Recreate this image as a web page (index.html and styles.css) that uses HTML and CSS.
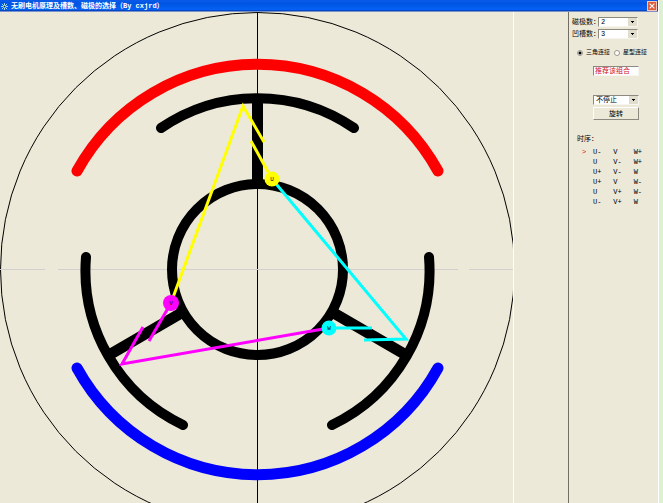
FILE: index.html
```html
<!DOCTYPE html>
<html lang="zh-CN">
<head>
    <meta charset="UTF-8">
    <meta name="viewport" content="width=device-width, initial-scale=1.0">
    <title>无刷电机原理及槽数、磁极的选择</title>
    <link rel="stylesheet" href="styles.css">
</head>
<body>
    <div class="window">
        <header class="titlebar">
            <svg class="app-icon" viewBox="0 0 8 8" aria-hidden="true">
                <path d="M4 0V8M0 4H8M1 1L7 7M7 1L1 7" stroke="#b8f0e8" fill="none"/>
                <circle cx="4" cy="4" r="1" fill="#123"/>
            </svg>
            <h1>无刷电机原理及槽数、磁极的选择（By cxjrd）</h1>
            <button class="close" aria-label="关闭">
                <svg viewBox="0 0 10 10" aria-hidden="true"><path d="M2 2L8 8M8 2L2 8" stroke="#fff" stroke-width="1.4"/></svg>
            </button>
        </header>
        <main class="content">
            <!-- origin is the motor shaft -->
            <svg class="motor" viewBox="-257 -257 513 491" role="img" aria-label="电机绕组图">
                <g fill="none" stroke="#000">
                    <circle cx="0.5" cy="0.5" r="257"/>
                    <path d="M0.5 -257V234"/>
                    <path d="M-257 0.5H-212M-199 0.5H201M212 0.5H256" stroke="#d2d0ce"/>
                </g>
                <g fill="none" stroke-width="11" stroke-linecap="round">
                    <path d="M-180 -98A206 206 0 0 1 181 -98" stroke="#f00"/>
                    <path d="M-180 99A206 206 0 0 0 181 99" stroke="#00f"/>
                </g>
                <g fill="none" stroke="#000" stroke-width="10" stroke-linecap="round">
                    <circle cx="0.5" cy="0.5" r="85.5"/>
                    <path d="M-96 -141A171 171 0 0 1 97 -141"/>
                    <path d="M-171 -12A171 171 0 0 0 -74 156"/>
                    <path d="M172 -12A171 171 0 0 1 75 156"/>
                    <path d="M0.5 -170V-85M-148 86L-74 43M149 86L75 43" stroke-linecap="butt" stroke-width="11"/>
                </g>
                <g fill="none" stroke-width="3">
                    <path d="M-86 34L-14 -163L7 -127M-6 -128L15 -90" stroke="#ff0"/>
                    <path d="M15 -90L149 70L107 71M115 59H72" stroke="#0ff"/>
                    <path d="M72 59L-135 95L-114 58M-108 72L-86 34" stroke="#f0f"/>
                </g>
                <g class="nodes">
                    <circle cx="15" cy="-90" r="7.5" fill="#ff0"/>
                    <circle cx="-86" cy="34" r="8" fill="#f0f"/>
                    <circle cx="72" cy="59" r="7.5" fill="#0ff"/>
                    <text x="15" y="-88">U</text>
                    <text x="-86" y="36">V</text>
                    <text x="72" y="61">W</text>
                </g>
            </svg>
            <aside class="panel">
                <div class="field">
                    <label for="poles">磁极数：</label>
                    <select id="poles"><option>2</option><option>4</option></select>
                </div>
                <div class="field">
                    <label for="slots">凹槽数：</label>
                    <select id="slots"><option>3</option><option>6</option></select>
                </div>
                <div class="wiring">
                    <label><input type="radio" name="wiring" checked>三角连接</label>
                    <label><input type="radio" name="wiring">星型连接</label>
                </div>
                <div class="actions">
                    <input class="advice" type="text" value="推荐该组合" aria-label="组合建议" readonly>
                    <select aria-label="停止方式"><option>不停止</option><option>停止</option></select>
                    <button class="rotate">旋转</button>
                </div>
                <h2>时序：</h2>
                <table class="sequence">
                    <tr><td class="mark">&gt;</td><td>U-</td><td>V</td><td>W+</td></tr>
                    <tr><td></td><td>U</td><td>V-</td><td>W+</td></tr>
                    <tr><td></td><td>U+</td><td>V-</td><td>W</td></tr>
                    <tr><td></td><td>U+</td><td>V</td><td>W-</td></tr>
                    <tr><td></td><td>U</td><td>V+</td><td>W-</td></tr>
                    <tr><td></td><td>U-</td><td>V+</td><td>W</td></tr>
                </table>
            </aside>
        </main>
    </div>
</body>
</html>
```
FILE: styles.css
```css
* {
    box-sizing: border-box;
}
body {
    margin: 0;
    background: #dcf0d2;
    color: #000;
    font-family: "Liberation Mono", "Noto Sans CJK SC", monospace;
    font-size: 7px;
    line-height: 10px;
}
h1, h2 {
    margin: 0;
    font-size: 7px;
}
button, input, select {
    margin: 0;
    font: inherit;
    color: inherit;
    border-radius: 0;
}
.window {
    display: flex;
    flex-direction: column;
    min-height: 100vh;
    margin-right: 4px;
    background: #ece9d8;
    border-right: 1px solid #fff;
}
.titlebar {
    display: flex;
    align-items: center;
    gap: 3px;
    height: 12px;
    padding: 0 1px;
    background: linear-gradient(#0a5be8, #0054e3 30%, #0562f5 80%, #0344c0 88%, #b9bfd0);
    color: #fff;
}
.app-icon {
    width: 7px;
    height: 7px;
}
.titlebar h1 {
    flex: 1;
    white-space: nowrap;
}
.close {
    display: flex;
    width: 10px;
    height: 10px;
    padding: 0;
    border: 1px solid #f3c9bd;
    background: #dd5b37;
}
.content {
    display: flex;
    flex: 1;
}
.motor {
    flex: 1;
    min-width: 0;
    align-self: flex-start;
}
.nodes text {
    font-size: 6px;
    text-anchor: middle;
}
.panel {
    width: 145px;
    padding: 4px 4px 0 58px;
    border-left: 1px solid #fff;
    background: linear-gradient(#716f64, #716f64) 54px 0 / 1px 100% no-repeat;
}
.field {
    display: flex;
    height: 12px;
    align-items: center;
}
.field label {
    width: 26px;
    white-space: nowrap;
}
select {
    width: 40px;
    height: 10px;
    padding: 0 2px;
    border: 1px solid #8c8a7e;
    border-right-color: #f6f5ee;
    border-bottom-color: #f6f5ee;
    appearance: none;
    line-height: 8px;
    background:
        linear-gradient(#000, #000) right 3px top 3px / 3px 1px no-repeat,
        linear-gradient(#000, #000) right 4px top 4px / 1px 1px no-repeat,
        linear-gradient(#e0ddcc, #e0ddcc) right / 9px 100% no-repeat,
        #fff;
}
.wiring {
    display: flex;
    gap: 4px;
    margin: 8px 0 0 5px;
    font-size: 6px;
    white-space: nowrap;
}
.wiring label {
    display: flex;
    align-items: center;
    gap: 3px;
}
.wiring input {
    width: 6px;
    height: 6px;
    border: 1px solid #9a988c;
    border-radius: 50%;
    appearance: none;
    background: #fff;
}
.wiring input:checked {
    background: radial-gradient(#000 1px, #fff 2px);
}
.actions {
    display: flex;
    flex-direction: column;
    width: 46px;
    margin: 8px 0 0 21px;
}
.actions select {
    width: 100%;
}
.advice {
    width: 100%;
    height: 10px;
    margin-bottom: 19px;
    padding: 0 1px;
    border: 1px solid #8c8a7e;
    border-right-color: #f6f5ee;
    border-bottom-color: #f6f5ee;
    background: #fff;
    color: #d01020;
}
.rotate {
    height: 13px;
    margin-top: 2px;
    padding: 0;
    border: 1px solid #fff;
    border-right-color: #8c8a7e;
    border-bottom-color: #8c8a7e;
    background: #ece9d8;
}
.panel h2 {
    margin: 14px 0 0 5px;
    font-weight: normal;
}
.sequence {
    width: 72px;
    margin: 3px 0 0 10px;
    border-collapse: collapse;
    table-layout: fixed;
}
.sequence td {
    height: 10px;
    padding: 0;
}
.sequence .mark {
    width: 11px;
    color: #e01010;
}
```
